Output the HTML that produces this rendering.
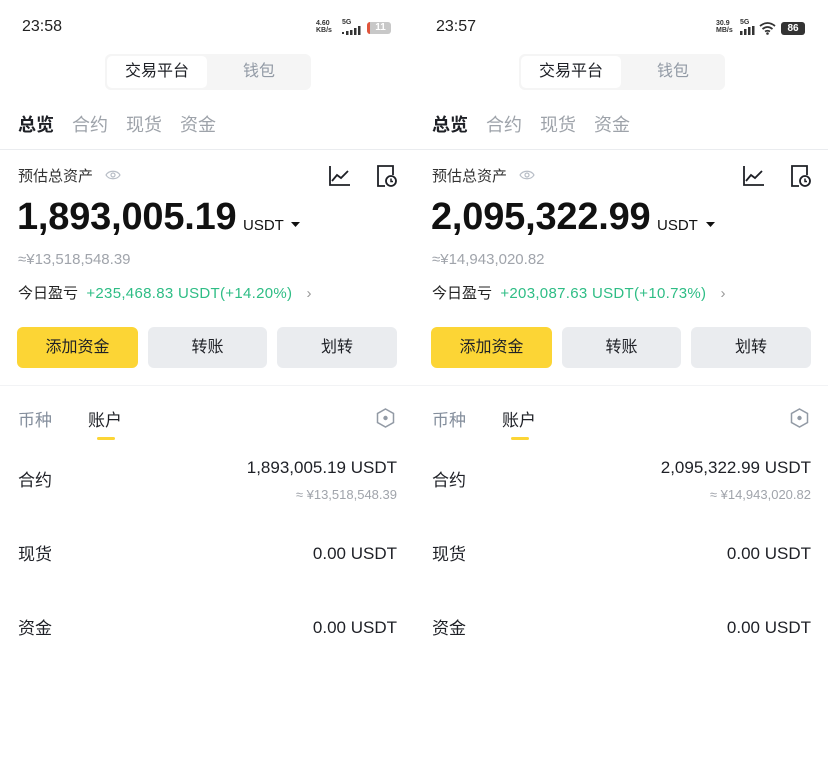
<!DOCTYPE html>
<html><head><meta charset="utf-8"><style>
*{margin:0;padding:0;box-sizing:border-box}
body{width:829px;height:782px;background:#fff;font-family:"Liberation Sans","Noto Sans CJK SC",sans-serif;color:#1e2026;position:relative;overflow:hidden}
.p{position:absolute;top:0;width:414px;height:782px}
.a{position:absolute;white-space:nowrap}
.time{left:22px;top:18px;font-size:16px;color:#222}
.seg{left:105px;top:54px;width:206px;height:36px;background:#f5f5f5;border-radius:6px}
.seg .on{position:absolute;left:2px;top:2px;width:100px;height:32px;background:#fff;border-radius:5px;text-align:center;line-height:32px;font-size:16px;color:#1e2026}
.seg .off{position:absolute;left:102px;top:2px;width:104px;height:32px;text-align:center;line-height:32px;font-size:16px;color:#929aa5}
.tab{top:111px;font-size:18px;color:#9ea3aa}
.hr{position:absolute;left:0;width:414px;height:1px;background:#eaecef}
.lbl{left:18px;top:165px;font-size:15px;color:#333}
.big{left:17px;top:196px;font-size:38px;font-weight:bold;color:#111;letter-spacing:-0.2px}
.usdt{top:217px;font-size:15px;color:#111}
.cny{left:18px;top:251px;font-size:15px;color:#a0a4ab}
.pnl{left:18px;top:282px;font-size:15px;color:#222}
.btn{position:absolute;top:327px;height:41px;border-radius:6px;text-align:center;line-height:41px;font-size:16px;color:#1e2026;background:#eaecef}
.row{font-size:17px;color:#1e2026}
.sub{font-size:13px;color:#a0a4ab}
</style></head><body>

<div class="p" style="left:0">
<div class="a time">23:58</div>
<div class="a" style="left:316px;top:20px;font-size:7px;line-height:7px;font-weight:bold;color:#333">4.60<br>KB/s</div>
<div class="a" style="left:342px;top:19px;font-size:7px;font-weight:bold;color:#333">5G</div>
<svg class="a" style="left:342px;top:26px" width="22" height="10"><rect x="0" y="6" width="2" height="2" fill="#333"/><rect x="4" y="5" width="2.5" height="4" fill="#333"/><rect x="8" y="4" width="2.5" height="5" fill="#333"/><rect x="12" y="2" width="2.5" height="7" fill="#333"/><rect x="16" y="0" width="2.5" height="9" fill="#333"/></svg>
<div class="a" style="left:367px;top:22px;width:24px;height:12px;border-radius:3px;background:#c8c8c8;font-size:10px;color:#fff;text-align:center;line-height:12px;font-weight:bold;border-left:3px solid #e0553c">11</div>
<div class="a seg"><div class="on">交易平台</div><div class="off">钱包</div></div>
<div class="a tab" style="left:18px;color:#1e2026;font-weight:bold">总览</div>
<div class="a tab" style="left:72px">合约</div>
<div class="a tab" style="left:126px">现货</div>
<div class="a tab" style="left:180px">资金</div>
<div class="hr" style="top:149px"></div>
<div class="a lbl">预估总资产</div>
<svg class="a" style="left:105px;top:169px" width="16" height="12" viewBox="0 0 16 12"><path d="M1 6C4 1 12 1 15 6C12 11 4 11 1 6Z" fill="none" stroke="#b7bdc6" stroke-width="1.2"/><circle cx="8" cy="6" r="2" fill="none" stroke="#b7bdc6" stroke-width="1.2"/></svg>
<svg class="a" style="left:329px;top:165px" width="22" height="22" viewBox="0 0 22 22"><path d="M1 1V20H21M3 16L8 10L12 13L19 6" fill="none" stroke="#1e2026" stroke-width="1.8"/></svg>
<svg class="a" style="left:376px;top:164px" width="22" height="24" viewBox="0 0 22 24"><path d="M9 22H2V2H17V11" fill="none" stroke="#1e2026" stroke-width="1.8"/><circle cx="15" cy="17" r="5" fill="none" stroke="#1e2026" stroke-width="1.8"/><path d="M15 14.5V17.5H17" fill="none" stroke="#1e2026" stroke-width="1.5"/></svg>
<div class="a big">1,893,005.19</div>
<div class="a usdt" style="left:243px">USDT</div>
<svg class="a" style="left:291px;top:222px" width="9" height="6"><path d="M0 0H9L4.5 5Z" fill="#111"/></svg>
<div class="a cny">≈¥13,518,548.39</div>
<div class="a pnl">今日盈亏&nbsp; <span style="color:#2ebd85;letter-spacing:0.3px">+235,468.83 USDT(+14.20%)</span> <span style="color:#999;margin-left:10px">›</span></div>
<div class="btn" style="left:17px;width:121px;background:#fcd535">添加资金</div>
<div class="btn" style="left:148px;width:119px">转账</div>
<div class="btn" style="left:277px;width:120px">划转</div>
<div class="hr" style="top:385px;background:#f2f3f5"></div>
<div class="a" style="left:18px;top:406px;font-size:17px;color:#848e9c">币种</div>
<div class="a" style="left:88px;top:406px;font-size:17px;color:#1e2026">账户</div>
<div class="a" style="left:97px;top:437px;width:18px;height:3px;background:#fcd535;border-radius:2px"></div>
<svg class="a" style="left:376px;top:408px" width="19" height="20" viewBox="0 0 19 20"><path d="M9.5 1L17.5 5.5V14.5L9.5 19L1.5 14.5V5.5Z" fill="none" stroke="#929aa5" stroke-width="1.5"/><circle cx="9.5" cy="10" r="2.2" fill="#929aa5"/></svg>
<div class="a row" style="left:18px;top:466px">合约</div>
<div class="a row" style="right:17px;top:458px">1,893,005.19 USDT</div>
<div class="a sub" style="right:17px;top:487px">≈ ¥13,518,548.39</div>
<div class="a row" style="left:18px;top:540px">现货</div>
<div class="a row" style="right:17px;top:544px">0.00 USDT</div>
<div class="a row" style="left:18px;top:614px">资金</div>
<div class="a row" style="right:17px;top:618px">0.00 USDT</div>
</div>

<div class="p" style="left:414px">
<div class="a time">23:57</div>
<div class="a" style="left:302px;top:20px;font-size:7px;line-height:7px;font-weight:bold;color:#333">30.9<br>MB/s</div>
<div class="a" style="left:326px;top:19px;font-size:7px;font-weight:bold;color:#333">5G</div>
<svg class="a" style="left:326px;top:26px" width="16" height="10"><rect x="0" y="5" width="2.5" height="4" fill="#333"/><rect x="4" y="3" width="2.5" height="6" fill="#333"/><rect x="8" y="1" width="2.5" height="8" fill="#333"/><rect x="12" y="0" width="2.5" height="9" fill="#333"/></svg>
<svg class="a" style="left:345px;top:21px" width="17" height="14" viewBox="0 0 17 14"><path d="M1 5Q8.5 -1 16 5M3.5 8Q8.5 4 13.5 8M6 10.5Q8.5 9 11 10.5" fill="none" stroke="#333" stroke-width="1.8"/><circle cx="8.5" cy="12.5" r="1.3" fill="#333"/></svg>
<div class="a" style="left:367px;top:22px;width:24px;height:13px;border-radius:3px;background:#333;font-size:10px;color:#fff;text-align:center;line-height:13px;font-weight:bold">86</div>
<div class="a seg"><div class="on">交易平台</div><div class="off">钱包</div></div>
<div class="a tab" style="left:18px;color:#1e2026;font-weight:bold">总览</div>
<div class="a tab" style="left:72px">合约</div>
<div class="a tab" style="left:126px">现货</div>
<div class="a tab" style="left:180px">资金</div>
<div class="hr" style="top:149px"></div>
<div class="a lbl">预估总资产</div>
<svg class="a" style="left:105px;top:169px" width="16" height="12" viewBox="0 0 16 12"><path d="M1 6C4 1 12 1 15 6C12 11 4 11 1 6Z" fill="none" stroke="#b7bdc6" stroke-width="1.2"/><circle cx="8" cy="6" r="2" fill="none" stroke="#b7bdc6" stroke-width="1.2"/></svg>
<svg class="a" style="left:329px;top:165px" width="22" height="22" viewBox="0 0 22 22"><path d="M1 1V20H21M3 16L8 10L12 13L19 6" fill="none" stroke="#1e2026" stroke-width="1.8"/></svg>
<svg class="a" style="left:376px;top:164px" width="22" height="24" viewBox="0 0 22 24"><path d="M9 22H2V2H17V11" fill="none" stroke="#1e2026" stroke-width="1.8"/><circle cx="15" cy="17" r="5" fill="none" stroke="#1e2026" stroke-width="1.8"/><path d="M15 14.5V17.5H17" fill="none" stroke="#1e2026" stroke-width="1.5"/></svg>
<div class="a big">2,095,322.99</div>
<div class="a usdt" style="left:243px">USDT</div>
<svg class="a" style="left:292px;top:222px" width="9" height="6"><path d="M0 0H9L4.5 5Z" fill="#111"/></svg>
<div class="a cny">≈¥14,943,020.82</div>
<div class="a pnl">今日盈亏&nbsp; <span style="color:#2ebd85;letter-spacing:0.3px">+203,087.63 USDT(+10.73%)</span> <span style="color:#999;margin-left:10px">›</span></div>
<div class="btn" style="left:17px;width:121px;background:#fcd535">添加资金</div>
<div class="btn" style="left:148px;width:119px">转账</div>
<div class="btn" style="left:277px;width:120px">划转</div>
<div class="hr" style="top:385px;background:#f2f3f5"></div>
<div class="a" style="left:18px;top:406px;font-size:17px;color:#848e9c">币种</div>
<div class="a" style="left:88px;top:406px;font-size:17px;color:#1e2026">账户</div>
<div class="a" style="left:97px;top:437px;width:18px;height:3px;background:#fcd535;border-radius:2px"></div>
<svg class="a" style="left:376px;top:408px" width="19" height="20" viewBox="0 0 19 20"><path d="M9.5 1L17.5 5.5V14.5L9.5 19L1.5 14.5V5.5Z" fill="none" stroke="#929aa5" stroke-width="1.5"/><circle cx="9.5" cy="10" r="2.2" fill="#929aa5"/></svg>
<div class="a row" style="left:18px;top:466px">合约</div>
<div class="a row" style="right:17px;top:458px">2,095,322.99 USDT</div>
<div class="a sub" style="right:17px;top:487px">≈ ¥14,943,020.82</div>
<div class="a row" style="left:18px;top:540px">现货</div>
<div class="a row" style="right:17px;top:544px">0.00 USDT</div>
<div class="a row" style="left:18px;top:614px">资金</div>
<div class="a row" style="right:17px;top:618px">0.00 USDT</div>
</div>
</body></html>
